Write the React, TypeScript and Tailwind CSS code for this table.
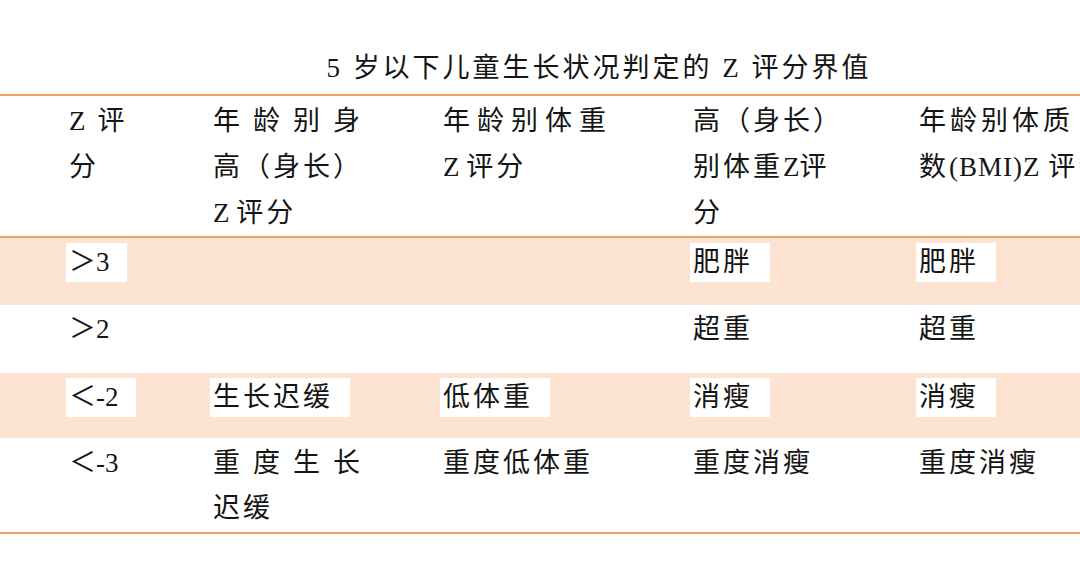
import type { ReactNode } from "react";

const cols = "grid grid-cols-[213px_230px_250px_226px_1fr]";

// latin bits sit tighter than the CJK text around them
function L({ children }: { children: ReactNode }) {
  return <span className="tracking-normal">{children}</span>;
}

function Hl({ children }: { children: ReactNode }) {
  return (
    <span className="-ml-[3px] inline-block h-[39px] bg-white pl-[3px] pr-[17px] leading-[39px]">
      {children}
    </span>
  );
}

type Row = {
  bg: string;
  h: string;
  cells: ReactNode[];
};

const rows: Row[] = [
  {
    bg: "bg-[#fce3d2]",
    h: "h-[67px]",
    cells: [<Hl><L>＞3</L></Hl>, null, null, <Hl>肥胖</Hl>, <Hl>肥胖</Hl>],
  },
  {
    bg: "bg-white",
    h: "h-[68px]",
    cells: [<L>＞2</L>, null, null, "超重", "超重"],
  },
  {
    bg: "bg-[#fce3d2]",
    h: "h-[65px]",
    cells: [<Hl><L>＜-2</L></Hl>, <Hl>生长迟缓</Hl>, <Hl>低体重</Hl>, <Hl>消瘦</Hl>, <Hl>消瘦</Hl>],
  },
];

export default function App() {
  return (
    <div className="h-[581px] w-[1080px] overflow-hidden bg-white font-['Liberation_Serif','Noto_Sans_CJK_SC',serif] text-[27px] tracking-[3px] text-[#151515]">
      <div className="w-[1198px]">
        <h1 className="pt-[45px] pb-[3px] text-center text-[27px] font-normal leading-[46px]">
          5 岁以下儿童生长状况判定的 Z 评分界值
        </h1>

        {/* header */}
        <div className={`${cols} h-[144px] border-y-2 border-[#f2a068] pt-[2px] leading-[46px] whitespace-nowrap`}>
          <div className="pl-[69px]">
            <div><L>Z</L><span className="ml-[12px]">评</span></div>
            <div>分</div>
          </div>
          <div>
            <div className="tracking-[13px]">年龄别身</div>
            <div>高（身长）</div>
            <div><L>Z </L>评分</div>
          </div>
          <div>
            <div className="tracking-[7px]">年龄别体重</div>
            <div><L>Z </L>评分</div>
          </div>
          <div>
            <div>高（身长）</div>
            <div>别体重<L>Z</L>评</div>
            <div>分</div>
          </div>
          <div>
            <div className="tracking-[4px]">年龄别体质</div>
            <div>数<span className="tracking-[1px]">(BMI)Z </span>评分</div>
          </div>
        </div>

        {rows.map((r, i) => (
          <div key={i} className={`${cols} ${r.bg} ${r.h} pt-[5px] leading-[39px] whitespace-nowrap`}>
            {r.cells.map((c, j) => (
              <div key={j} className={j === 0 ? "pl-[69px]" : ""}>
                {c}
              </div>
            ))}
          </div>
        ))}

        <div className={`${cols} h-[96px] border-b-2 border-[#f2a068] pt-[3px] leading-[45px] whitespace-nowrap`}>
          <div className="pl-[69px]"><L>＜-3</L></div>
          <div>
            <div className="tracking-[13px]">重度生长</div>
            <div>迟缓</div>
          </div>
          <div>重度低体重</div>
          <div>重度消瘦</div>
          <div>重度消瘦</div>
        </div>
      </div>
    </div>
  );
}
